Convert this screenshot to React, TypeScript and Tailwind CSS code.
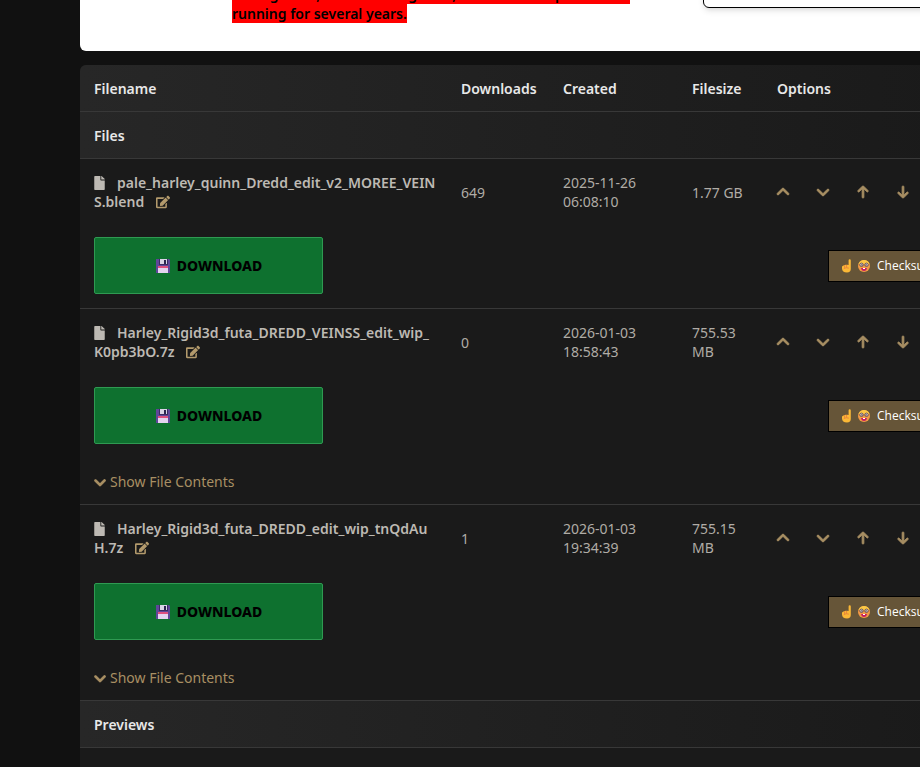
import type { ReactNode } from "react"
import { FaEdit, FaFile } from "react-icons/fa"
import { FaAngleDown, FaAngleUp, FaArrowDown, FaArrowUp, FaChevronDown } from "react-icons/fa6"

interface FileEntry {
    name: string
    downloads: number
    created: string
    size: string
    archive: boolean
}

const files: FileEntry[] = [
    {
        name: "pale_harley_quinn_Dredd_edit_v2_MOREE_VEINS.blend",
        downloads: 649,
        created: "2025-11-26 06:08:10",
        size: "1.77 GB",
        archive: false,
    },
    {
        name: "Harley_Rigid3d_futa_DREDD_VEINSS_edit_wip_K0pb3bO.7z",
        downloads: 0,
        created: "2026-01-03 18:58:43",
        size: "755.53 MB",
        archive: true,
    },
    {
        name: "Harley_Rigid3d_futa_DREDD_edit_wip_tnQdAuH.7z",
        downloads: 1,
        created: "2026-01-03 19:34:39",
        size: "755.15 MB",
        archive: true,
    },
]

function FloppyIcon() {
    return (
        <svg viewBox="0 0 16 16" className="size-4" aria-hidden="true">
            <path d="M1 1h13l1 1v13H1z" fill="#5f4799" />
            <path d="M4 1h9v6H4z" fill="#3b2c63" />
            <path d="M5 1h7v5H5z" fill="#d9d4e6" />
            <path d="M9 2h2v4H9z" fill="#2d2550" />
            <path d="M3 8h10v2H3z" fill="#e0507f" />
            <path d="M3 10h10v5H3z" fill="#e4d3f0" />
        </svg>
    )
}

function PointingHand() {
    return (
        <svg viewBox="0 0 12 14" className="h-3.5 w-3" aria-hidden="true">
            <path d="M7.6 1.4a1.1 1.1 0 0 1 2.2 0V10q0 3.4-3.8 3.6Q1.2 13.5 1 9.5V7.8q.3-1 1.3-1 .4-.9 1.5-.7.8-.8 1.9-.2.7-.4 1.9 0z" fill="#fbb836" />
            <path d="M3 9.5q2-1.5 4.5-.5M3.6 6.5v2M5.6 6v2" fill="none" stroke="#e4783c" strokeWidth=".8" strokeLinecap="round" />
        </svg>
    )
}

function NerdFace() {
    return (
        <svg viewBox="0 0 14 14" className="size-3.5" aria-hidden="true">
            <circle cx="7" cy="7" r="6" fill="#f39a45" />
            <path d="M1.5 5Q3 1 7 1t5.5 4z" fill="#fcc845" />
            <circle cx="4.5" cy="5.8" r="1.7" fill="#e9dfd8" stroke="#5b4650" strokeWidth=".9" />
            <circle cx="9.5" cy="5.8" r="1.7" fill="#e9dfd8" stroke="#5b4650" strokeWidth=".9" />
            <circle cx="4.8" cy="5.9" r=".7" fill="#3f3036" />
            <circle cx="9.2" cy="5.9" r=".7" fill="#3f3036" />
            <path d="M4 9h6q-.5 3-3 3T4 9z" fill="#c51f62" />
            <path d="M6 9h2v1H6z" fill="#fff" />
        </svg>
    )
}

function IconButton({ label, children }: { label: string; children: ReactNode }) {
    return (
        <button type="button" aria-label={label} className="flex w-3 justify-center text-[#a88f63]">
            {children}
        </button>
    )
}

function SectionRow({ title }: { title: string }) {
    return (
        <tr className="bg-linear-to-r from-[#272727] to-[#181818]">
            <th colSpan={5} scope="colgroup" className="border-b border-[#383838] px-3.5 pt-3.5 pb-[13px] font-semibold text-[#e8e8e8]">
                {title}
            </th>
        </tr>
    )
}

function FileRows({ file }: { file: FileEntry }) {
    return (
        <>
            <tr>
                <td className="pt-3.5 pr-2.5 pb-3 pl-3.5 font-semibold break-all text-[#bdb9b3]">
                    <FaFile className="mr-3 inline-block h-3.5 w-[11px] align-[-2px]" />
                    {file.name}
                    <button type="button" aria-label={`Edit ${file.name}`} className="ml-3 align-[-2px] text-[#b39a6c]">
                        <FaEdit className="size-3.5" />
                    </button>
                </td>
                <td className="px-3.5 pt-3.5 pb-3">{file.downloads}</td>
                <td className="pt-3.5 pr-10 pb-3 pl-3.5">{file.created}</td>
                <td className="px-3.5 pt-3.5 pb-3">{file.size}</td>
                <td className="px-3.5 pt-3.5 pb-3">
                    <div className="flex items-center gap-7">
                        <IconButton label="Move up"><FaAngleUp className="size-4 shrink-0 stroke-current stroke-[24]" /></IconButton>
                        <IconButton label="Move down"><FaAngleDown className="size-4 shrink-0 stroke-current stroke-[24]" /></IconButton>
                        <IconButton label="Move to top"><FaArrowUp className="size-3.5 shrink-0 stroke-current stroke-[32]" /></IconButton>
                        <IconButton label="Move to bottom"><FaArrowDown className="size-3.5 shrink-0 stroke-current stroke-[32]" /></IconButton>
                    </div>
                </td>
            </tr>
            <tr>
                <td colSpan={4} className={file.archive ? "px-3.5 pt-3.5" : "border-b border-[#383838] p-3.5"}>
                    <button
                        type="button"
                        className="flex h-[57px] w-[229px] items-center justify-center gap-1.5 rounded-xs border border-[#2f9a52] bg-[#0e712f] font-extrabold text-black"
                    >
                        <FloppyIcon />
                        DOWNLOAD
                    </button>
                </td>
                <td className={file.archive ? "pt-3.5 pl-[65px]" : "border-b border-[#383838] py-3.5 pl-[65px]"}>
                    <button
                        type="button"
                        className="flex h-8 items-center gap-1 border border-black bg-[#665538] px-3 font-['Open_Sans',sans-serif] text-xs whitespace-nowrap text-white"
                    >
                        <PointingHand />
                        <NerdFace />
                        <span className="ml-0.5">Checksum</span>
                    </button>
                </td>
            </tr>
            {file.archive && (
                <tr>
                    <td colSpan={5} className="border-b border-[#383838] px-3.5 pt-7 pb-[13px]">
                        <button type="button" className="flex items-center gap-1 text-[#a88f63]">
                            <FaChevronDown className="size-3 stroke-current stroke-[48]" />
                            Show File Contents
                        </button>
                    </td>
                </tr>
            )}
        </>
    )
}

export default function App() {
    return (
        <div className="min-h-screen overflow-hidden bg-[#111111] pl-20 font-['Noto_Sans',sans-serif] text-[14px] leading-[19px] text-[#b0aca6]">
            {/* Notice card, scrolled mostly out of view */}
            <section className="-mt-[15px] mb-3.5 flex min-w-[1000px] items-start rounded-b-md bg-white pb-7">
                <p className="ml-[152px] w-[471px] font-semibold text-black">
                    <mark className="bg-[#ff0000] text-black">
                        having sales, and a hosting crew, we have to depend on us
                        <br />
                        running for several years.
                    </mark>
                </p>
                <div className="h-[23px] flex-1 rounded-b-md border border-black bg-white shadow-md" />
            </section>

            <main className="min-h-[702px] min-w-[1000px] overflow-hidden rounded-t-md bg-[#1a1a1a]">
                <table className="w-full table-fixed border-separate border-spacing-0 text-left">
                    <colgroup>
                        <col className="w-[367px]" />
                        <col className="w-[102px]" />
                        <col className="w-[129px]" />
                        <col className="w-[85px]" />
                        <col />
                    </colgroup>
                    <thead>
                        <tr className="bg-linear-to-r from-[#272727] to-[#181818] text-[#e8e8e8]">
                            {["Filename", "Downloads", "Created", "Filesize", "Options"].map((title) => (
                                <th key={title} scope="col" className="border-b border-[#383838] px-3.5 pt-3.5 pb-[13px] font-semibold">
                                    {title}
                                </th>
                            ))}
                        </tr>
                    </thead>
                    <tbody>
                        <SectionRow title="Files" />
                        {files.map((file) => (
                            <FileRows key={file.name} file={file} />
                        ))}
                        <SectionRow title="Previews" />
                    </tbody>
                </table>
            </main>
        </div>
    )
}
